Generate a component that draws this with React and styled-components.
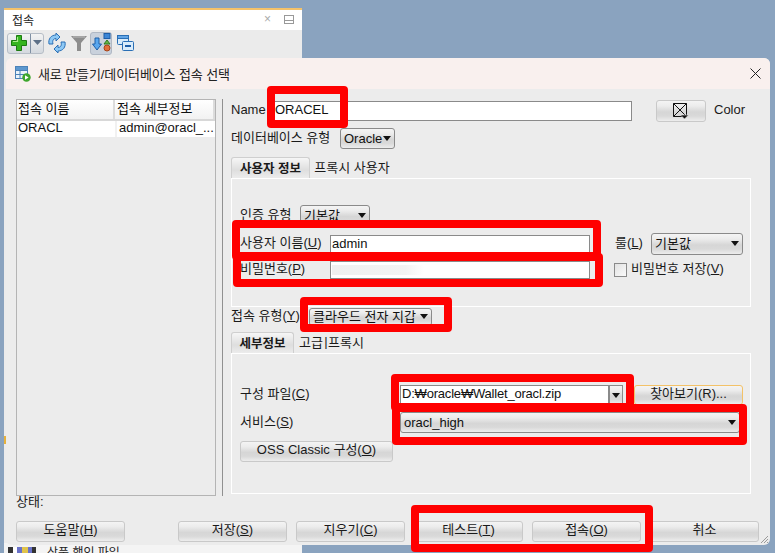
import React from "react";
import styled, { createGlobalStyle, css } from "styled-components";

const Global = createGlobalStyle`
  html, body { margin: 0; padding: 0; background: #8aa3bf; }
  * { box-sizing: border-box; }
  body { font-family: "Liberation Sans", "Noto Sans CJK KR", sans-serif; font-size: 13px; color: #111; }
`;

const Desk = styled.div`
  position: relative; width: 775px; height: 553px; overflow: hidden;
  background: #8aa3bf; padding: 8px 0 0 4px;
`;
const Back = styled.div`
  position: relative; width: 298px; height: 545px; background: #ebebeb;
  border-top: 2px solid #f4c26a;
`;
const Tick = styled.span`
  position: absolute; left: 0; top: 426px; width: 2px; height: 8px; background: #e6b13c;
`;
const BackTitle = styled.div`
  height: 20px; background: #fff; display: flex; align-items: center; padding: 0 8px 2px;
  justify-content: space-between; color: #222; font-size: 12px;
`;
const Pin = styled.div`
  display: flex; align-items: center; gap: 13px; color: #aaa;
`;
const Mini = styled.span`
  width: 10px; height: 9px; border: 1px solid #999; background: linear-gradient(transparent 60%, #999 60% 75%, transparent 75%);
`;
const Tools = styled.div`
  height: 26px; display: flex; align-items: center; padding-left: 3px;
`;
const SplitBtn = styled.div`
  display: flex; align-items: center; height: 21px; margin-right: 2px; border: 1px solid #b6bdc6; border-radius: 3px;
  background: linear-gradient(#f3f3f3, #d4d9df);
`;
const ToolCell = styled.span`
  display: flex; align-items: center; justify-content: center; flex: none; width: ${p => p.$w || 22}px; height: 100%;
  ${p => p.$sep && css`border-left: 1px solid #7f8fa3;`}
  ${p => p.$active && css`background: #c9d1dc; border: 1px solid #b0b8c4; border-radius: 3px; height: 23px;`}
`;
const Stub = styled.div`
  display: flex; gap: 3px; align-items: flex-start; height: 10px; margin-top: 487px; padding: 4px 0 0 4px;
  font-size: 12px; color: #222; line-height: 12px; background: #f4f4f4; white-space: nowrap; overflow: hidden;
`;
const StubIcon = styled.span`
  flex: none; width: 28px; height: 6px; margin-right: 8px;
  background: linear-gradient(90deg, #333 0 5px, #fff 5px 9px, #6a72c8 9px 14px, #e0c34a 14px 20px, #6a72c8 20px 24px, #333 24px);
`;
const Dialog = styled.div`
  position: absolute; left: 6px; top: 58px; width: 764px; height: 487px;
  background: #ececec; border-radius: 6px; overflow: hidden; display: flex; flex-direction: column;
`;
const TitleBar = styled.div`
  height: 31px; flex: none; background: #f9f0ee; display: flex; align-items: center; padding: 0 9px; gap: 7px;
  font-size: 13px; color: #222; letter-spacing: -.1px;
`;
const Close = styled.span`
  margin-left: auto; display: flex;
`;
const Body = styled.div`
  flex: none; display: flex; height: 406px; padding: 10px 0 0 10px;
`;
const List = styled.div`
  width: 200px; height: 397px; border: 1px solid #b4b4b4; flex: none;
`;
const ListRow = styled.div`
  display: grid; grid-template-columns: 98px 1fr; height: ${p => p.$head ? 21 : 16}px;
  background: ${p => p.$head ? "linear-gradient(#fff, #f2f2f2)" : "#fff"};
  ${p => p.$head && css`border-bottom: 2px solid #d8d8d8;`}
`;
const ListCell = styled.div`
  padding-left: ${p => p.$first ? 1 : 2}px; line-height: ${p => p.$head ? 18 : 14}px; white-space: nowrap; overflow: hidden;
  ${p => p.$head && css`border-right: 2px solid #dcdcdc;`}
  ${p => !p.$head && !p.$first && css`border-left: 2px solid #f1f1f1;`}
`;
const Divider = styled.div`
  width: 1px; height: 397px; background: #909090; margin: 0 8px 0 6px; flex: none;
`;
const Right = styled.div`
  width: 528px; flex: none; display: flex; flex-direction: column; padding-top: 1px;
`;
const Row = styled.div`
  display: flex; align-items: center; height: ${p => p.$h}px; margin-top: ${p => p.$mt || 0}px; flex: none;
`;
const Label = styled.label`
  flex: none; width: ${p => p.$w}px; margin-left: ${p => p.$ml || 0}px; white-space: nowrap; line-height: 15px; padding-bottom: 3px; color: #1a1a1a;
`;
const Mn = styled.u`text-underline-offset: 1px;`;
const Input = styled.div`
  width: ${p => p.$w}px; height: ${p => p.$h || 19}px; flex: none; background: #fff; border: 1px solid #8a8a8a;
  padding-left: 1px; line-height: 15px; white-space: nowrap; overflow: hidden; position: relative;
`;
const Blur = styled.span`
  display: block; position: absolute; left: 1px; top: 3px; width: 92px; height: 10px;
  background: linear-gradient(90deg, #efefef, #f3f3f3 80%, #fff);
`;
const Gloss = css`
  background: linear-gradient(#f4f4f4 0%, #ececec 25%, #d6d6d6 55%, #d9d9d9 75%, #ededed 100%);
`;
const Select = styled.div`
  width: ${p => p.$w}px; height: ${p => p.$h || 21}px; flex: none; margin-left: ${p => p.$ml || 0}px;
  border: 1px solid #8a8a8a; border-radius: 3px; ${Gloss};
  display: flex; align-items: center; justify-content: space-between; padding: 0 3px 1px; white-space: nowrap; line-height: 15px;
`;
const Caret = styled.span`
  flex: none; width: 0; height: 0; border-left: 4.5px solid transparent; border-right: 4.5px solid transparent; border-top: 5px solid #111;
`;
const Button = styled.div`
  width: ${p => p.$w || 109}px; height: ${p => p.$h || 21}px; flex: none; margin-left: ${p => p.$ml || 0}px;
  border: 1px solid ${p => p.$focus ? "#f3c268" : "#c9c9c9"}; border-radius: 3px; ${Gloss};
  display: flex; align-items: center; justify-content: center; padding-bottom: ${p => p.$pb ?? 5}px; white-space: nowrap; line-height: 15px; color: #1a1a1a;
`;
const Tabs = styled.div`
  display: flex; height: 21px; align-items: stretch; margin-top: ${p => p.$mt}px; flex: none;
`;
const Tab = styled.div`
  display: flex; align-items: center; justify-content: center; padding-bottom: 2px; white-space: nowrap; flex: none; width: ${p => p.$w}px;
  margin-left: ${p => p.$ml || 0}px; color: #1a1a1a;
  ${p => p.$active && css`
    font-weight: 700; font-size: 12.5px; border: 1px solid #cfcfcf; border-bottom: 0; border-radius: 3px 3px 0 0;
    background: linear-gradient(#f6f6f6, #dedede 60%, #ececec);
  `}
`;
const TabPanel = styled.div`
  width: 520px; height: ${p => p.$h}px; border: 1px solid #fff; flex: none; padding: ${p => p.$pt}px 0 0 8px;
  display: flex; flex-direction: column;
`;
const Check = styled.span`
  width: 13px; height: 14px; flex: none; border: 1px solid #8a8a8a; margin: 0 4px 0 24px;
  background: linear-gradient(135deg, #e2e2e2, #fafafa);
`;
const Combo = styled.div`
  display: flex; width: 223px; height: 20px; flex: none; background: #fff; border: 1px solid #8a8a8a;
`;
const ComboText = styled.div`
  flex: 1; padding-left: 1px; line-height: 15px; letter-spacing: -.2px; white-space: nowrap; overflow: hidden;
`;
const ComboBtn = styled.div`
  width: 14px; flex: none; border-left: 2px solid #8a8a8a; display: flex; align-items: center; justify-content: center; ${Gloss};
`;
const Status = styled.div`
  height: 16px; margin: 0 0 0 10px; line-height: 14px; flex: none; color: #222;
`;
const Footer = styled.div`
  display: flex; justify-content: space-between; padding: 10px 11px 0 10px; flex: none;
`;
const Group = styled.div`display: flex; gap: 9px;`;
const Mark = styled.div`
  position: absolute; left: ${p => p.$x}px; top: ${p => p.$y}px; width: ${p => p.$w}px; height: ${p => p.$h}px;
  border: 8px solid #ff0000; border-radius: 4px; pointer-events: none;
`;
const Grip = styled.svg`position: absolute; right: 1px; bottom: 1px;`;

const PlusIcon = () => (
  <svg width="18" height="18" viewBox="0 0 18 18">
    <path d="M6.500 1.500h5v5h5v5h-5v5h-5v-5h-5v-5h5z" fill="#35b51f" stroke="#1d7a12" strokeWidth="1" />
    <path d="M7.500 3v4.500H3" fill="none" stroke="#a7ec87" strokeWidth="1.200" />
  </svg>
);
const DropSmall = () => (
  <svg width="9" height="6" viewBox="0 0 9 6"><path d="M0 0h9L4.500 5z" fill="#5d7087" /></svg>
);
const RefreshIcon = () => (
  <svg width="18" height="20" viewBox="0 0 18 20">
    <path d="M1 11C0 6 3 2 8 2V0l4 4-4 4V5.500C5.500 5.500 4 7.500 5 11z" fill="#8cc8f5" stroke="#2a6fb5" strokeWidth="1" />
    <path d="M17 9c1 5-2 9-7 9v2l-4-4 4-4v2.500c2.500 0 4-2 3-5.500z" fill="#8cc8f5" stroke="#2a6fb5" strokeWidth="1" />
  </svg>
);
const FilterIcon = () => (
  <svg width="18" height="18" viewBox="0 0 18 18"><path d="M1 2h16l-6 7v8H7V9z" fill="#8d8d8d" /><path d="M3 3h12" stroke="#bdbdbd" /></svg>
);
const TreeIcon = () => (
  <svg width="19" height="20" viewBox="0 0 19 20">
    <path d="M3 5h4v6h2.500L5 17 .5 11H3z" fill="#5aa7ee" stroke="#1d5ea8" />
    <rect x="12" y="0.500" width="6" height="5" fill="#3c86d6" stroke="#1d5ea8" />
    <path d="M15 7l3 4h-6z" fill="#66b545" stroke="#2e7a1d" />
    <circle cx="15" cy="15" r="3" fill="#e2703a" stroke="#a5441a" />
  </svg>
);
const CollapseIcon = () => (
  <svg width="17" height="16" viewBox="0 0 17 16">
    <rect x="0.500" y="0.500" width="11" height="9" rx="1" fill="#d9ecfb" stroke="#2a6fb5" />
    <rect x="0.500" y="0.500" width="11" height="3" fill="#62a5e6" stroke="#2a6fb5" />
    <rect x="5.500" y="6.500" width="11" height="9" rx="1" fill="#d9ecfb" stroke="#2a6fb5" />
    <path d="M8 11h6" stroke="#1d5ea8" strokeWidth="2" />
  </svg>
);
const WinIcon = () => (
  <svg width="16" height="16" viewBox="0 0 16 16">
    <rect x="0.500" y="0.500" width="12" height="12" fill="#eaf3fb" stroke="#4d82b8" />
    <path d="M0.500 4.500h12M0.500 8.500h12M5 4.500v8" stroke="#4d82b8" />
    <rect x="1" y="1" width="11" height="3" fill="#5d97cf" />
    <circle cx="11.500" cy="11.500" r="4.200" fill="#3ea62d" />
    <path d="M10 9.200l3.600 2.300L10 13.800z" fill="#fff" />
  </svg>
);
const CloseIcon = () => (
  <svg width="11" height="11" viewBox="0 0 11 11"><path d="M.5.5l10 10M10.500.5l-10 10" stroke="#222" strokeWidth="1" /></svg>
);
const ColorIcon = () => (
  <svg width="18" height="18" viewBox="0 0 18 18">
    <path d="M1.500 1.500h13v13h-13zM1.500 1.500l13 13M14.500 1.500l-13 13" fill="none" stroke="#111" />
    <path d="M8.500 13h8l-4 4z" fill="#111" stroke="#e4e4e4" strokeWidth=".6" />
  </svg>
);

export default function App() {
  return (
    <Desk>
      <Global />
      <Back>
        <Tick />
        <BackTitle>
          <span>접속</span>
          <Pin>
            <span>×</span>
            <Mini />
          </Pin>
        </BackTitle>
        <Tools>
          <SplitBtn>
            <ToolCell><PlusIcon /></ToolCell>
            <ToolCell $w={13} $sep><DropSmall /></ToolCell>
          </SplitBtn>
          <ToolCell><RefreshIcon /></ToolCell>
          <ToolCell><FilterIcon /></ToolCell>
          <ToolCell $active><TreeIcon /></ToolCell>
          <ToolCell $w={26}><CollapseIcon /></ToolCell>
        </Tools>
        <Stub>
          <StubIcon />
          <span>상품 행인 파일</span>
        </Stub>
      </Back>
      <Dialog>
        <TitleBar>
          <WinIcon />
          <span>새로 만들기/데이터베이스 접속 선택</span>
          <Close><CloseIcon /></Close>
        </TitleBar>
        <Body>
          <List>
            <ListRow $head>
              <ListCell $head $first>접속 이름</ListCell>
              <ListCell $head>접속 세부정보</ListCell>
            </ListRow>
            <ListRow>
              <ListCell $first>ORACL</ListCell>
              <ListCell>admin@oracl_...</ListCell>
            </ListRow>
          </List>
          <Divider />
          <Right>
            <Row $h={22}>
              <Label $w={42}>Name</Label>
              <Input $w={359} $h={20}>ORACEL</Input>
              <Button $w={50} $h={22} $ml={24} $pb={0}><ColorIcon /></Button>
              <Label $w={40} $ml={8}>Color</Label>
            </Row>
            <Row $h={21} $mt={6}>
              <Label $w={109}>데이터베이스 유형</Label>
              <Select $w={55}>Oracle<Caret /></Select>
            </Row>
            <Tabs $mt={8}>
              <Tab $active $w={79}>사용자 정보</Tab>
              <Tab $w={76} $ml={4}>프록시 사용자</Tab>
            </Tabs>
            <TabPanel $h={129} $pt={26}>
              <Row $h={21}>
                <Label $w={60}>인증 유형</Label>
                <Select $w={70}>기본값<Caret /></Select>
              </Row>
              <Row $h={22} $mt={7}>
                <Label $w={90}>사용자 이름(<Mn>U</Mn>)</Label>
                <Input $w={260}>admin</Input>
                <Label $w={25} $ml={25}>룰(<Mn>L</Mn>)</Label>
                <Select $w={92} $h={22} $ml={11}>기본값<Caret /></Select>
              </Row>
              <Row $h={18} $mt={6}>
                <Label $w={90}>비밀번호(<Mn>P</Mn>)</Label>
                <Input $w={260} $h={18}><Blur /></Input>
                <Check />
                <Label $w={100}>비밀번호 저장(<Mn>V</Mn>)</Label>
              </Row>
            </TabPanel>
            <Row $h={18} $mt={1}>
              <Label $w={78}>접속 유형(<Mn>Y</Mn>)</Label>
              <Select $w={123} $h={18}>클라우드 전자 지갑<Caret /></Select>
            </Row>
            <Tabs $mt={6}>
              <Tab $active $w={63}>세부정보</Tab>
              <Tab $w={26} $ml={4}>고급</Tab>
              <Tab $w={4}>|</Tab>
              <Tab $w={36}>프록시</Tab>
            </Tabs>
            <TabPanel $h={141} $pt={31}>
              <Row $h={20}>
                <Label $w={160}>구성 파일(<Mn>C</Mn>)</Label>
                <Combo>
                  <ComboText>D:₩oracle₩Wallet_oracl.zip</ComboText>
                  <ComboBtn><Caret /></ComboBtn>
                </Combo>
                <Button $w={109} $h={20} $ml={11} $pb={3} $focus>찾아보기(R)...</Button>
              </Row>
              <Row $h={21} $mt={7}>
                <Label $w={160}>서비스(<Mn>S</Mn>)</Label>
                <Select $w={340}>oracl_high<Caret /></Select>
              </Row>
              <Row $h={21} $mt={8}>
                <Button $w={153}>OSS Classic 구성(<Mn>O</Mn>)</Button>
              </Row>
            </TabPanel>
          </Right>
        </Body>
        <Status>상태:</Status>
        <Footer>
          <Button>도움말(<Mn>H</Mn>)</Button>
          <Group>
            <Button>저장(<Mn>S</Mn>)</Button>
            <Button>지우기(<Mn>C</Mn>)</Button>
            <Button>테스트(<Mn>T</Mn>)</Button>
            <Button>접속(<Mn>O</Mn>)</Button>
            <Button>취소</Button>
          </Group>
        </Footer>
        <Grip width="11" height="11" viewBox="0 0 11 11">
          <path d="M10 3L3 10M10 6L6 10M10 9L9 10" stroke="#9a9a9a" />
        </Grip>
      </Dialog>
      <Mark $x={267} $y={86} $w={81} $h={42} />
      <Mark $x={232} $y={220} $w={369} $h={40} />
      <Mark $x={233} $y={253} $w={370} $h={34} />
      <Mark $x={300} $y={297} $w={152} $h={35} />
      <Mark $x={391} $y={374} $w={243} $h={37} />
      <Mark $x={392} $y={404} $w={355} $h={41} />
      <Mark $x={411} $y={505} $w={242} $h={47} />
    </Desk>
  );
}
